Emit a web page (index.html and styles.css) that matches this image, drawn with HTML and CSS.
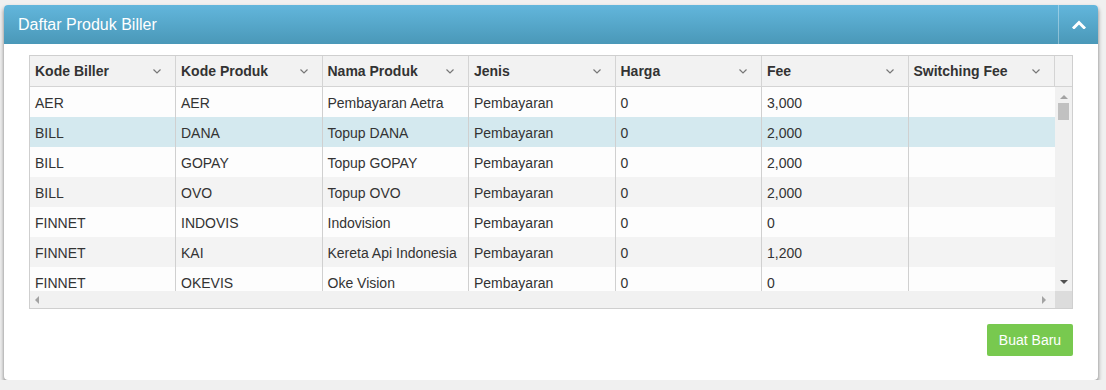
FILE: index.html
```html
<!DOCTYPE html>
<html lang="id">
<head>
    <meta charset="UTF-8">
    <title>Daftar Produk Biller</title>
    <link rel="stylesheet" href="styles.css">
</head>
<body>
    <div class="panel">
        <div class="panel-head">
            <h3 class="panel-title">Daftar Produk Biller</h3>
            <button class="panel-toggle">
                <svg width="14" height="9" viewBox="0 0 14 9"><polyline points="2,7.5 7,2.5 12,7.5" fill="none" stroke="#fff" stroke-width="3" stroke-linecap="square"/></svg>
            </button>
        </div>
        <div class="panel-body">
            <div class="grid">
                <div class="grid-head">
                    <div class="head-cell">Kode Biller<span class="sort"><svg width="8" height="5" viewBox="0 0 8 5"><polyline points="0.5,0.5 4,4 7.5,0.5" fill="none" stroke="#777" stroke-width="1.2"/></svg></span></div>
                    <div class="head-cell">Kode Produk<span class="sort"><svg width="8" height="5" viewBox="0 0 8 5"><polyline points="0.5,0.5 4,4 7.5,0.5" fill="none" stroke="#777" stroke-width="1.2"/></svg></span></div>
                    <div class="head-cell">Nama Produk<span class="sort"><svg width="8" height="5" viewBox="0 0 8 5"><polyline points="0.5,0.5 4,4 7.5,0.5" fill="none" stroke="#777" stroke-width="1.2"/></svg></span></div>
                    <div class="head-cell">Jenis<span class="sort"><svg width="8" height="5" viewBox="0 0 8 5"><polyline points="0.5,0.5 4,4 7.5,0.5" fill="none" stroke="#777" stroke-width="1.2"/></svg></span></div>
                    <div class="head-cell">Harga<span class="sort"><svg width="8" height="5" viewBox="0 0 8 5"><polyline points="0.5,0.5 4,4 7.5,0.5" fill="none" stroke="#777" stroke-width="1.2"/></svg></span></div>
                    <div class="head-cell">Fee<span class="sort"><svg width="8" height="5" viewBox="0 0 8 5"><polyline points="0.5,0.5 4,4 7.5,0.5" fill="none" stroke="#777" stroke-width="1.2"/></svg></span></div>
                    <div class="head-cell">Switching Fee<span class="sort"><svg width="8" height="5" viewBox="0 0 8 5"><polyline points="0.5,0.5 4,4 7.5,0.5" fill="none" stroke="#777" stroke-width="1.2"/></svg></span></div>
                    <div class="head-filler"></div>
                </div>
                <div class="grid-main">
                    <div class="grid-rows">
                        <div class="row"><div class="cell">AER</div><div class="cell">AER</div><div class="cell">Pembayaran Aetra</div><div class="cell">Pembayaran</div><div class="cell">0</div><div class="cell">3,000</div><div class="cell"></div></div>
                        <div class="row selected"><div class="cell">BILL</div><div class="cell">DANA</div><div class="cell">Topup DANA</div><div class="cell">Pembayaran</div><div class="cell">0</div><div class="cell">2,000</div><div class="cell"></div></div>
                        <div class="row"><div class="cell">BILL</div><div class="cell">GOPAY</div><div class="cell">Topup GOPAY</div><div class="cell">Pembayaran</div><div class="cell">0</div><div class="cell">2,000</div><div class="cell"></div></div>
                        <div class="row alt"><div class="cell">BILL</div><div class="cell">OVO</div><div class="cell">Topup OVO</div><div class="cell">Pembayaran</div><div class="cell">0</div><div class="cell">2,000</div><div class="cell"></div></div>
                        <div class="row"><div class="cell">FINNET</div><div class="cell">INDOVIS</div><div class="cell">Indovision</div><div class="cell">Pembayaran</div><div class="cell">0</div><div class="cell">0</div><div class="cell"></div></div>
                        <div class="row alt"><div class="cell">FINNET</div><div class="cell">KAI</div><div class="cell">Kereta Api Indonesia</div><div class="cell">Pembayaran</div><div class="cell">0</div><div class="cell">1,200</div><div class="cell"></div></div>
                        <div class="row"><div class="cell">FINNET</div><div class="cell">OKEVIS</div><div class="cell">Oke Vision</div><div class="cell">Pembayaran</div><div class="cell">0</div><div class="cell">0</div><div class="cell"></div></div>
                    </div>
                    <div class="vscroll">
                        <span class="arrow-up"></span>
                        <span class="thumb"></span>
                        <span class="arrow-down"></span>
                    </div>
                </div>
                <div class="hscroll">
                    <div class="hscroll-track">
                        <span class="arrow-left"></span>
                        <span class="arrow-right"></span>
                    </div>
                    <div class="corner"></div>
                </div>
            </div>
            <div class="actions">
                <button class="btn-new">Buat Baru</button>
            </div>
        </div>
    </div>
</body>
</html>
```

FILE: styles.css
```css
body {
    margin: 0;
    padding: 5px 8px 0 4px;
    background-color: #f0f0f0;
    font-family: "Liberation Sans", Arial, sans-serif;
    color: #333;
}
.panel {
    width: 1094px;
    background: #fff;
    border-radius: 4px;
    box-shadow: 0 3px 4px rgba(0, 0, 0, 0.5);
}
.panel-head {
    display: flex;
    align-items: stretch;
    height: 39px;
    border-radius: 4px 4px 0 0;
    background: linear-gradient(to bottom, #62b6dc, #4a98b8);
}
.panel-title {
    flex: 1;
    margin: 0;
    padding-left: 14px;
    font-size: 16px;
    font-weight: normal;
    line-height: 39px;
    color: #fff;
}
.panel-toggle {
    width: 40px;
    border: none;
    border-left: 1px solid rgba(255, 255, 255, 0.35);
    background: transparent;
    display: flex;
    align-items: center;
    justify-content: center;
    padding: 0;
    cursor: pointer;
}
.panel-body {
    padding: 11px 25px 24px 25px;
}
.grid {
    border: 1px solid #cfcfcf;
    font-size: 14px;
}
.grid-head {
    display: grid;
    grid-template-columns: 146px repeat(6, 1fr) 17px;
    height: 30px;
    background: #f2f2f2;
    border-bottom: 1px solid #d4d4d4;
}
.head-cell {
    display: flex;
    align-items: center;
    justify-content: space-between;
    padding: 0 14px 0 5px;
    font-weight: bold;
    color: #333;
    border-right: 1px solid #d4d4d4;
}
.sort {
    display: flex;
    align-items: center;
}
.head-filler {
    background: #f2f2f2;
}
.grid-main {
    display: flex;
    height: 204px;
}
.grid-rows {
    flex: 1;
    overflow: hidden;
}
.row {
    display: grid;
    grid-template-columns: 146px repeat(6, 1fr);
    height: 30px;
    background: #fdfdfd;
}
.row.alt {
    background: #f3f3f3;
}
.row.selected {
    background: #d4e9ef;
}
.cell {
    padding: 2px 5px 0;
    line-height: 28px;
    white-space: nowrap;
    overflow: hidden;
    border-right: 1px solid #d0d0d0;
}
.cell:last-child {
    border-right: none;
}
.vscroll {
    width: 17px;
    background: #f1f1f1;
    display: flex;
    flex-direction: column;
    align-items: center;
}
.arrow-up {
    margin-top: 8px;
    border-left: 4px solid transparent;
    border-right: 4px solid transparent;
    border-bottom: 4px solid #a3a3a3;
}
.thumb {
    margin-top: 4px;
    width: 11px;
    height: 17px;
    background: #c1c1c1;
}
.arrow-down {
    margin-top: auto;
    margin-bottom: 7px;
    border-left: 4px solid transparent;
    border-right: 4px solid transparent;
    border-top: 4px solid #505050;
}
.hscroll {
    display: flex;
    height: 17px;
}
.hscroll-track {
    flex: 1;
    background: #f1f1f1;
    display: flex;
    align-items: center;
    justify-content: space-between;
    padding: 0 9px 0 5px;
}
.arrow-left {
    border-top: 4px solid transparent;
    border-bottom: 4px solid transparent;
    border-right: 4px solid #a3a3a3;
}
.arrow-right {
    border-top: 4px solid transparent;
    border-bottom: 4px solid transparent;
    border-left: 4px solid #a3a3a3;
}
.corner {
    width: 17px;
    background: #dcdcdc;
}
.actions {
    display: flex;
    justify-content: flex-end;
    margin-top: 15px;
}
.btn-new {
    width: 86px;
    height: 32px;
    border: none;
    border-radius: 2px;
    background: #78c94f;
    color: #fff;
    font-family: "Liberation Sans", Arial, sans-serif;
    font-size: 14px;
    cursor: pointer;
}
```
